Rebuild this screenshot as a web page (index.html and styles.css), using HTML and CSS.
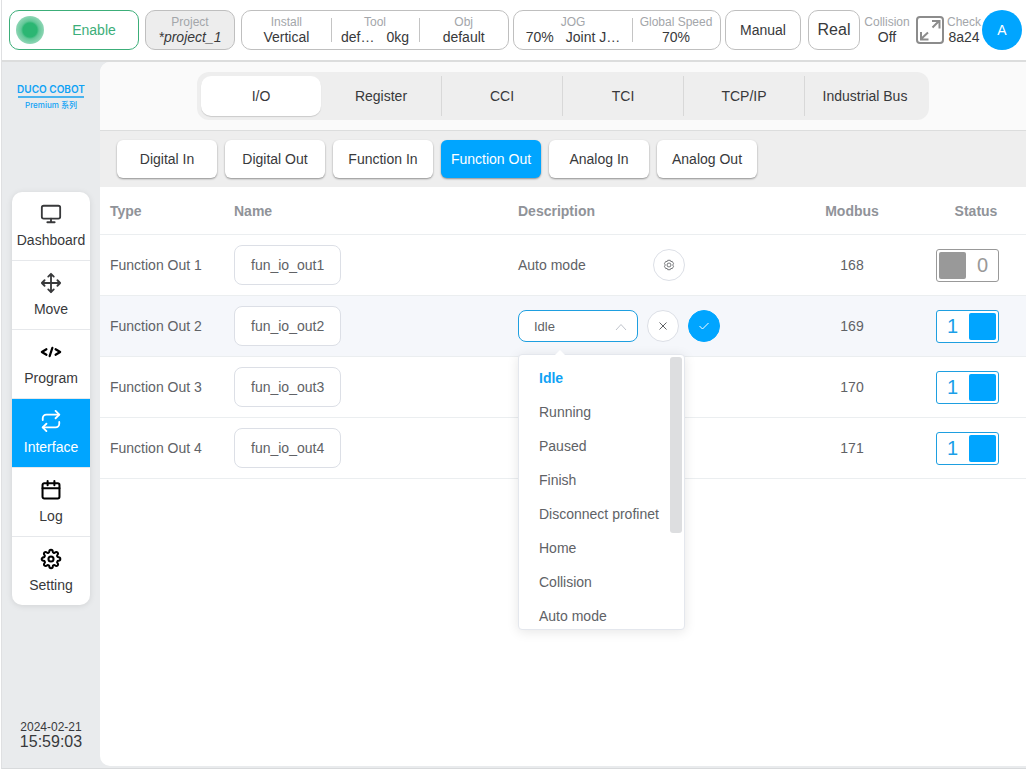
FILE: index.html
```html
<!DOCTYPE html>
<html lang="en">
<head>
  <meta charset="UTF-8" />
  <title>DUCO COBOT</title>
  <meta name="viewport" content="width=device-width, initial-scale=1.0" />
  <link rel="stylesheet" href="styles.css">
</head>
<body>
  <div class="app">
    <header class="topbar">
      <div class="top-group wide">
        <button class="enable"><span class="dot"></span><span class="enable-text">Enable</span></button>
        <button class="pill project"><span class="label">Project</span><span class="value">*project_1</span></button>
        <div class="pill cells thirds">
          <div class="info"><span class="label">Install</span><span class="value">Vertical</span></div>
          <div class="info"><span class="label">Tool</span><span class="value pair"><span>def…</span><span>0kg</span></span></div>
          <div class="info"><span class="label">Obj</span><span class="value">default</span></div>
        </div>
      </div>
      <div class="top-group tight">
        <div class="pill cells jog">
          <div class="info"><span class="label">JOG</span><span class="value pair"><span>70%</span><span>Joint J…</span></span></div>
          <div class="info speed"><span class="label">Global Speed</span><span class="value">70%</span></div>
        </div>
        <button class="pill manual">Manual</button>
      </div>
      <div class="top-group right">
        <button class="pill real">Real</button>
        <div class="info collision"><span class="label">Collision</span><span class="value">Off</span></div>
        <button class="expand" aria-label="Fullscreen">
          <svg width="28" height="28" viewBox="0 0 28 28" fill="none" stroke="#8c8c8c" stroke-width="2">
            <rect x="1" y="1" width="26" height="26" rx="3"/>
            <path d="M16.500 11.500L23 5M16 5h7.500v7.500M12 16.500L5 23M5 16v7.500h7.500"/>
          </svg>
        </button>
        <div class="info check"><span class="label">Check</span><span class="value">8a24</span></div>
        <button class="avatar">A</button>
      </div>
    </header>

    <div class="main">
      <aside class="sidebar">
        <div class="logo">
          <div class="logo-name">DUCO COBOT</div>
          <div class="logo-sub">Premium 系列</div>
        </div>
        <nav class="nav">
          <a href="#">
            <svg class="icon" viewBox="0 0 24 24"><rect x="2" y="3" width="20" height="14" rx="2"/><path d="M8 21h8M12 17v4"/></svg>
            Dashboard
          </a>
          <a href="#">
            <svg class="icon" viewBox="0 0 24 24"><path d="M5 9l-3 3 3 3M9 5l3-3 3 3M15 19l-3 3-3-3M19 9l3 3-3 3M2 12h20M12 2v20"/></svg>
            Move
          </a>
          <a href="#">
            <svg class="icon black" viewBox="0 0 24 24"><path d="M7 9l-5 3 5 3M17 9l5 3-5 3M13.500 7.500l-3 9"/></svg>
            Program
          </a>
          <a href="#" class="active">
            <svg class="icon" viewBox="0 0 24 24"><path d="M17 1l4 4-4 4"/><path d="M3 11V9a4 4 0 0 1 4-4h14M7 23l-4-4 4-4"/><path d="M21 13v2a4 4 0 0 1-4 4H3"/></svg>
            Interface
          </a>
          <a href="#">
            <svg class="icon black" viewBox="-1 -1 26 26"><rect x="2" y="4" width="20" height="18" rx="2"/><path d="M16 1.500v5M8 1.500v5M2 10h20"/></svg>
            Log
          </a>
          <a href="#">
            <svg class="icon black" viewBox="-1 -1 26 26"><circle cx="12" cy="12" r="3"/><path d="M19.400 15a1.650 1.650 0 0 0 .33 1.820l.06.06a2 2 0 0 1 0 2.830 2 2 0 0 1-2.830 0l-.06-.06a1.650 1.650 0 0 0-1.820-.33 1.650 1.650 0 0 0-1 1.510V21a2 2 0 0 1-2 2 2 2 0 0 1-2-2v-.09A1.650 1.650 0 0 0 9 19.400a1.650 1.650 0 0 0-1.820.33l-.06.06a2 2 0 0 1-2.830 0 2 2 0 0 1 0-2.830l.06-.06a1.650 1.650 0 0 0 .33-1.820 1.650 1.650 0 0 0-1.510-1H3a2 2 0 0 1-2-2 2 2 0 0 1 2-2h.09A1.650 1.650 0 0 0 4.600 9a1.650 1.650 0 0 0-.33-1.820l-.06-.06a2 2 0 0 1 0-2.830 2 2 0 0 1 2.830 0l.06.06a1.650 1.650 0 0 0 1.820.33H9a1.650 1.650 0 0 0 1-1.510V3a2 2 0 0 1 2-2 2 2 0 0 1 2 2v.09a1.650 1.650 0 0 0 1 1.510 1.650 1.650 0 0 0 1.820-.33l.06-.06a2 2 0 0 1 2.830 0 2 2 0 0 1 0 2.830l-.06.06a1.650 1.650 0 0 0-.33 1.820V9a1.650 1.650 0 0 0 1.510 1H21a2 2 0 0 1 2 2 2 2 0 0 1-2 2h-.09a1.650 1.650 0 0 0-1.510 1z"/></svg>
            Setting
          </a>
        </nav>
        <div class="clock">
          <div class="date">2024-02-21</div>
          <div class="time">15:59:03</div>
        </div>
      </aside>

      <main class="content">
        <div class="tabs-bar">
          <div class="tabs">
            <button class="tab active">I/O</button>
            <button class="tab">Register</button>
            <button class="tab">CCI</button>
            <button class="tab">TCI</button>
            <button class="tab">TCP/IP</button>
            <button class="tab">Industrial Bus</button>
          </div>
        </div>
        <div class="filters">
          <button class="filter">Digital In</button>
          <button class="filter">Digital Out</button>
          <button class="filter">Function In</button>
          <button class="filter active">Function Out</button>
          <button class="filter">Analog In</button>
          <button class="filter">Analog Out</button>
        </div>

        <table class="io-table">
          <thead>
            <tr>
              <th class="col-type">Type</th>
              <th class="col-name">Name</th>
              <th>Description</th>
              <th class="col-modbus">Modbus</th>
              <th class="col-status">Status</th>
            </tr>
          </thead>
          <tbody>
            <tr>
              <td>Function Out 1</td>
              <td><button class="name-btn">fun_io_out1</button></td>
              <td>
                <div class="desc">
                  <span class="desc-text">Auto mode</span>
                  <button class="round" aria-label="Edit">
                    <svg width="12" height="12" viewBox="0 0 14 14" fill="none" stroke="#606266" stroke-linejoin="round"><path d="M5.500 1.500h3l.6 1.500 1.700-.2 1.500 2.600-1 1.600 1 1.600-1.500 2.600-1.700-.2-.6 1.500h-3l-.6-1.500-1.700.2-1.500-2.600 1-1.600-1-1.600 1.500-2.600 1.700.2z"/><circle cx="7" cy="7" r="2.300"/></svg>
                  </button>
                </div>
              </td>
              <td class="modbus">168</td>
              <td><label class="switch"><input type="checkbox"><span>0</span></label></td>
            </tr>
            <tr class="current">
              <td>Function Out 2</td>
              <td><button class="name-btn">fun_io_out2</button></td>
              <td>
                <div class="desc">
                  <div class="select-wrap">
                    <select class="select" aria-label="Description">
                      <option>Idle</option>
                      <option>Running</option>
                      <option>Paused</option>
                      <option>Finish</option>
                      <option>Disconnect profinet</option>
                      <option>Home</option>
                      <option>Collision</option>
                      <option>Auto mode</option>
                    </select>
                    <svg class="chevron" width="12" height="8" viewBox="0 0 12 8" fill="none" stroke="#c0c4cc"><path d="M1 7l5-5.500L11 7"/></svg>
                    <div class="menu">
                      <ul class="menu-list" role="listbox" aria-label="Description options">
                        <li class="selected" role="option" aria-selected="true">Idle</li>
                        <li role="option">Running</li>
                        <li role="option">Paused</li>
                        <li role="option">Finish</li>
                        <li role="option">Disconnect profinet</li>
                        <li role="option">Home</li>
                        <li role="option">Collision</li>
                        <li role="option">Auto mode</li>
                      </ul>
                      <div class="thumb"></div>
                    </div>
                  </div>
                  <button class="round" aria-label="Cancel">
                    <svg width="12" height="12" viewBox="0 0 12 12" fill="none" stroke="#606266"><path d="M2.500 2.500l7 7M9.500 2.500l-7 7"/></svg>
                  </button>
                  <button class="round primary" aria-label="Confirm">
                    <svg width="12" height="12" viewBox="0 0 12 12" fill="none" stroke="#fff"><path d="M1.500 6l3 3 6-6"/></svg>
                  </button>
                </div>
              </td>
              <td class="modbus">169</td>
              <td><label class="switch on"><input type="checkbox" checked><span>1</span></label></td>
            </tr>
            <tr>
              <td>Function Out 3</td>
              <td><button class="name-btn">fun_io_out3</button></td>
              <td></td>
              <td class="modbus">170</td>
              <td><label class="switch on"><input type="checkbox" checked><span>1</span></label></td>
            </tr>
            <tr>
              <td>Function Out 4</td>
              <td><button class="name-btn">fun_io_out4</button></td>
              <td></td>
              <td class="modbus">171</td>
              <td><label class="switch on"><input type="checkbox" checked><span>1</span></label></td>
            </tr>
          </tbody>
        </table>
      </main>
    </div>
  </div>
</body>
</html>
```
FILE: styles.css
```css
* {
  box-sizing: border-box;
}
body {
  margin: 0;
  padding: 0 0 1px 1px;
  font-family: "Liberation Sans", Arial, "Noto Sans CJK SC", sans-serif;
  font-size: 14px;
  color: #38393b;
  background: #fff;
}
button {
  font: inherit;
  color: inherit;
  padding: 0;
  border: none;
  background: none;
  cursor: pointer;
}
svg {
  display: block;
}
.app {
  display: flex;
  flex-direction: column;
  height: calc(100vh - 1px);
  border-left: 1px solid #dfe0e2;
  border-bottom: 1px solid #d8dadc;
}

/* top bar */
.topbar {
  display: flex;
  height: 62px;
  flex-shrink: 0;
  padding: 10px 4px 10px 7px;
  border-bottom: 2px solid #dcdddd;
}
.top-group {
  display: flex;
  align-items: center;
}
.wide {
  flex: 1;
  gap: 6px;
  margin-right: 4px;
}
.tight {
  gap: 4px;
  margin-right: 7px;
}
.right {
  gap: 1px;
}
.pill {
  height: 40px;
  border: 1px solid #bfbfbf;
  border-radius: 10px;
}
.enable {
  display: flex;
  align-items: center;
  gap: 6px;
  width: 130px;
  height: 40px;
  padding-left: 6px;
  border: 1px solid #3cae79;
  border-radius: 10px;
  color: #3cae79;
}
.dot {
  width: 28px;
  height: 28px;
  border-radius: 50%;
  background: radial-gradient(circle, #2bb673 0, #2bb673 7px, #62c798 9px, #8fd6b5 14px);
}
.enable-text {
  flex: 1;
  text-align: center;
}
.project {
  display: flex;
  flex-direction: column;
  align-items: center;
  justify-content: center;
  width: 90px;
  background: #ededed;
}
.project .value {
  font-style: italic;
}
.cells {
  display: flex;
  align-items: center;
}
.thirds {
  flex: 1;
}
.info {
  text-align: center;
}
.cells .info {
  position: relative;
  flex: 1;
}
.cells .info + .info::before {
  content: "";
  position: absolute;
  left: 0;
  top: 3px;
  height: 24px;
  border-left: 1px solid #c4c4c4;
}
.label {
  display: block;
  font-size: 12px;
  line-height: 14px;
  color: #a3a6aa;
}
.value {
  display: block;
  line-height: 16px;
}
.pair {
  display: flex;
  justify-content: center;
  gap: 12px;
}
.jog {
  width: 208px;
}
.jog .speed {
  flex: 0 0 88px;
}
.manual {
  width: 76px;
}
.real {
  width: 52px;
  font-size: 16px;
}
.collision {
  width: 52px;
}
.expand {
  display: flex;
  justify-content: center;
  width: 32px;
}
.check {
  width: 34px;
}
.avatar {
  width: 40px;
  height: 40px;
  border-radius: 50%;
  background: #00a5ff;
  color: #fff;
}

/* sidebar */
.main {
  display: flex;
  flex: 1;
  min-height: 0;
  background: #e9ebed;
}
.sidebar {
  display: flex;
  flex-direction: column;
  width: 98px;
  flex-shrink: 0;
  padding: 20px 10px 18px;
}
.logo {
  height: 28px;
  margin-bottom: 82px;
  text-align: center;
  color: #0fa2f5;
  font-family: Inter, "Noto Sans CJK SC", sans-serif;
  white-space: nowrap;
}
.logo-name {
  margin: 0 6px;
  display: flex;
  justify-content: center;
  font-size: 10px;
  line-height: 14px;
  font-weight: 600;
  border-bottom: 2px solid #4ab4ee;
}
.logo-sub {
  font-size: 8px;
  line-height: 14px;
  font-weight: 500;
}
.nav {
  border-radius: 10px;
  background: #fff;
  overflow: hidden;
  box-shadow: 0 1px 6px rgba(0, 0, 0, 0.1);
}
.nav a {
  display: flex;
  flex-direction: column;
  align-items: center;
  gap: 7px;
  padding: 11px 0 12px;
  line-height: 16px;
  color: #38393b;
  text-decoration: none;
  border-bottom: 1px solid #e6e8eb;
}
.nav a:last-child {
  border-bottom: none;
}
.nav a.active {
  background: #00a5ff;
  color: #fff;
}
.icon {
  width: 22px;
  height: 22px;
  fill: none;
  stroke: currentColor;
  stroke-width: 2;
  stroke-linecap: round;
  stroke-linejoin: round;
}
.black {
  color: #000;
  stroke-width: 2.4;
}
.clock {
  margin-top: auto;
  text-align: center;
}
.date {
  font-size: 12px;
  line-height: 14px;
}
.time {
  font-size: 16px;
  line-height: 16px;
}

/* content */
.content {
  flex: 1;
  min-width: 0;
  margin-bottom: 2px;
  border-radius: 10px 0 0 10px;
  background: #fff;
  overflow: hidden;
}
.tabs-bar {
  display: flex;
  justify-content: center;
  padding: 10px;
  background: #fafafa;
  border-bottom: 1px solid #dcdddd;
}
.tabs {
  display: flex;
  padding: 4px;
  border-radius: 12px;
  background: #eee;
}
.tab {
  width: 121px;
  height: 40px;
  border-right: 1px solid #d8d8d8;
}
.tab.active {
  width: 120px;
  border: none;
  border-radius: 10px;
  background: #fff;
  box-shadow: 0 1px 1px rgba(0, 0, 0, 0.15);
}
.tab:last-child {
  width: 120px;
  border: none;
}
.filters {
  display: flex;
  gap: 8px;
  padding: 9px 17px;
  background: #eee;
}
.filter {
  width: 100px;
  height: 38px;
  border-radius: 6px;
  background: #fff;
  box-shadow: 0 1px 2px rgba(0, 0, 0, 0.4);
}
.filter.active {
  background: #00a5ff;
  color: #fff;
}

/* table */
.io-table {
  width: 100%;
  table-layout: fixed;
  border-collapse: separate;
  border-spacing: 0;
  color: #606266;
}
.io-table th,
.io-table td {
  height: 61px;
  padding: 0 10px;
  text-align: left;
  border-bottom: 1px solid #ebeef0;
}
.io-table th {
  height: 48px;
  color: #909399;
}
.col-type {
  width: 124px;
}
.col-name {
  width: 284px;
}
.io-table .col-modbus {
  width: 148px;
  text-align: center;
}
.io-table .col-status {
  width: 100px;
  text-align: center;
}
.io-table .modbus {
  text-align: center;
}
.current td {
  background: #f5f7fb;
}
.name-btn {
  display: block;
  height: 40px;
  padding: 0 16px;
  border: 1px solid #dcdfe6;
  border-radius: 8px;
  background: #fff;
}
.desc {
  display: flex;
  align-items: center;
  gap: 9px;
}
.desc-text {
  width: 126px;
}
.round {
  display: flex;
  align-items: center;
  justify-content: center;
  width: 32px;
  height: 32px;
  border: 1px solid #dcdfe6;
  border-radius: 50%;
  background: #fff;
}
.round.primary {
  border-color: #00a5ff;
  background: #00a5ff;
}
.select-wrap {
  position: relative;
  width: 120px;
}
.select {
  display: block;
  appearance: none;
  width: 100%;
  height: 32px;
  padding: 0 15px;
  border: 1px solid #1e9fe0;
  border-radius: 8px;
  background: #fff;
  font: inherit;
  font-size: 13px;
  color: #606266;
}
.chevron {
  position: absolute;
  right: 11px;
  top: 13px;
  pointer-events: none;
}
.menu {
  position: absolute;
  top: 44px;
  left: 0;
  z-index: 2;
  width: 167px;
  border: 1px solid #e4e7ed;
  border-radius: 4px;
  background: #fff;
  box-shadow: 0 2px 12px rgba(0, 0, 0, 0.1);
}
.menu::before {
  content: "";
  position: absolute;
  top: -5px;
  left: 35px;
  border: 6px solid transparent;
  border-top: none;
  border-bottom-color: #fff;
}
.menu-list {
  margin: 0;
  padding: 6px 0 0;
  height: 274px;
  overflow: hidden;
  list-style: none;
}
.menu-list li {
  padding: 0 20px;
  line-height: 34px;
  white-space: nowrap;
}
.menu-list .selected {
  font-weight: bold;
  color: #0fa2f5;
}
.thumb {
  position: absolute;
  top: 2px;
  right: 2px;
  width: 12px;
  height: 176px;
  border-radius: 3px;
  background: #dddee0;
}
.switch {
  display: flex;
  align-items: center;
  gap: 3px;
  width: 63px;
  height: 33px;
  padding: 2px;
  border: 1px solid #999;
  border-radius: 3px;
  background: #fff;
  font-size: 20px;
  color: #999;
  cursor: pointer;
}
.switch input {
  appearance: none;
  width: 27px;
  height: 27px;
  margin: 0;
  border-radius: 2px;
  background: #999;
}
.switch span {
  flex: 1;
  text-align: center;
}
.switch.on {
  flex-direction: row-reverse;
  border-color: #1e9fe0;
  color: #1a9fe8;
}
.switch.on input {
  background: #00a5ff;
}
```
